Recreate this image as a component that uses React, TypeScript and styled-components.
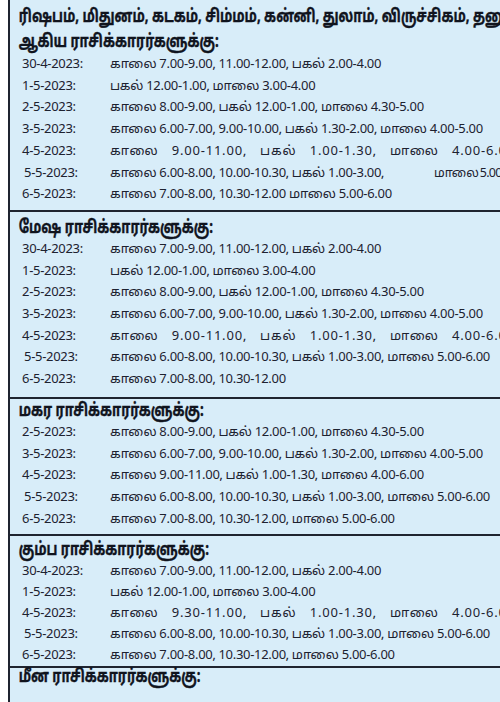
import { createGlobalStyle } from "styled-components";
import styled from "styled-components";

const GlobalStyle = createGlobalStyle`
  html, body {
    margin: 0;
    padding: 0;
    background: #ffffff;
    overflow: hidden;
  }
`;

const Page = styled.div`
  width: 500px;
  height: 702px;
  overflow: hidden;
  padding-left: 8px;
  box-sizing: border-box;
`;

const Board = styled.div`
  width: 560px;
  min-height: 702px;
  background-color: #d8edf9;
  border-left: 2px solid #1f2430;
  color: #1d2230;
  font-family: "Noto Sans Tamil", "Lohit Tamil", "Noto Sans", "DejaVu Sans", sans-serif;
`;

const Section = styled.section<{ $first?: boolean; $pt: number; $pb: number }>`
  border-top: ${(p) => (p.$first ? "none" : "2px solid #1f2430")};
  padding-top: ${(p) => p.$pt}px;
  padding-bottom: ${(p) => p.$pb}px;
`;

const Heading = styled.h2<{ $lh: number }>`
  margin: 0;
  padding-left: 12px;
  font-size: 18px;
  font-weight: 700;
  line-height: ${(p) => p.$lh}px;
  white-space: nowrap;
  color: #10141e;
  -webkit-text-stroke: 0.4px #10141e;
  transform: scaleX(0.73);
  transform-origin: left center;
`;

const Row = styled.div<{ $step: number }>`
  display: grid;
  grid-template-columns: 88px 1fr;
  padding-left: 12px;
  font-size: 13px;
  letter-spacing: -0.3px;
  line-height: ${(p) => p.$step}px;
  white-space: nowrap;
`;

const DateCell = styled.span<{ $shift?: boolean }>`
  padding-left: ${(p) => (p.$shift ? "2px" : "0")};
`;

const TimeCell = styled.span<{ $wide?: boolean }>`
  letter-spacing: ${(p) => (p.$wide ? "0.8px" : "-0.3px")};
  word-spacing: ${(p) => (p.$wide ? "9px" : "0")};
`;

const Tail = styled.span`
  margin-left: 50px;
  font-size: 12.5px;
  letter-spacing: -0.7px;
  word-spacing: -1px;
`;

type Entry = { date: string; time: string; wide?: boolean; tail?: string };
type Block = {
  title: string[];
  rows: Entry[];
  pt: number;
  pb: number;
  lh: number;
  step: number;
};

const blocks: Block[] = [
  {
    title: [
      "ரிஷபம், மிதுனம், கடகம், சிம்மம், கன்னி, துலாம், விருச்சிகம், தனுசு, மகரம், கும்பம், மீனம்",
      "ஆகிய ராசிக்காரர்களுக்கு:",
    ],
    pt: 5,
    pb: 3,
    lh: 25,
    step: 21.7,
    rows: [
      { date: "30-4-2023:", time: "காலை 7.00-9.00, 11.00-12.00, பகல் 2.00-4.00" },
      { date: "1-5-2023:", time: "பகல் 12.00-1.00, மாலை 3.00-4.00" },
      { date: "2-5-2023:", time: "காலை 8.00-9.00, பகல் 12.00-1.00, மாலை 4.30-5.00" },
      { date: "3-5-2023:", time: "காலை 6.00-7.00, 9.00-10.00, பகல் 1.30-2.00, மாலை 4.00-5.00" },
      { date: "4-5-2023:", time: "காலை 9.00-11.00, பகல் 1.00-1.30, மாலை 4.00-6.00", wide: true },
      { date: "5-5-2023:", time: "காலை 6.00-8.00, 10.00-10.30, பகல் 1.00-3.00,", tail: "மாலை 5.00-6.00" },
      { date: "6-5-2023:", time: "காலை 7.00-8.00, 10.30-12.00 மாலை 5.00-6.00" },
    ],
  },
  {
    title: ["மேஷ ராசிக்காரர்களுக்கு:"],
    pt: 6,
    pb: 5,
    lh: 22,
    step: 21.7,
    rows: [
      { date: "30-4-2023:", time: "காலை 7.00-9.00, 11.00-12.00, பகல் 2.00-4.00" },
      { date: "1-5-2023:", time: "பகல் 12.00-1.00, மாலை 3.00-4.00" },
      { date: "2-5-2023:", time: "காலை 8.00-9.00, பகல் 12.00-1.00, மாலை 4.30-5.00" },
      { date: "3-5-2023:", time: "காலை 6.00-7.00, 9.00-10.00, பகல் 1.30-2.00, மாலை 4.00-5.00" },
      { date: "4-5-2023:", time: "காலை 9.00-11.00, பகல் 1.00-1.30, மாலை 4.00-6.00", wide: true },
      { date: "5-5-2023:", time: "காலை 6.00-8.00, 10.00-10.30, பகல் 1.00-3.00, மாலை 5.00-6.00" },
      { date: "6-5-2023:", time: "காலை 7.00-8.00, 10.30-12.00" },
    ],
  },
  {
    title: ["மகர ராசிக்காரர்களுக்கு:"],
    pt: 2,
    pb: 3,
    lh: 22,
    step: 21.7,
    rows: [
      { date: "2-5-2023:", time: "காலை 8.00-9.00, பகல் 12.00-1.00, மாலை 4.30-5.00" },
      { date: "3-5-2023:", time: "காலை 6.00-7.00, 9.00-10.00, பகல் 1.30-2.00, மாலை 4.00-5.00" },
      { date: "4-5-2023:", time: "காலை 9.00-11.00, பகல் 1.00-1.30, மாலை 4.00-6.00" },
      { date: "5-5-2023:", time: "காலை 6.00-8.00, 10.00-10.30, பகல் 1.00-3.00, மாலை 5.00-6.00" },
      { date: "6-5-2023:", time: "காலை 7.00-8.00, 10.30-12.00, மாலை 5.00-6.00" },
    ],
  },
  {
    title: ["கும்ப ராசிக்காரர்களுக்கு:"],
    pt: 4,
    pb: 0,
    lh: 22,
    step: 20.8,
    rows: [
      { date: "30-4-2023:", time: "காலை 7.00-9.00, 11.00-12.00, பகல் 2.00-4.00" },
      { date: "1-5-2023:", time: "பகல் 12.00-1.00, மாலை 3.00-4.00" },
      { date: "4-5-2023:", time: "காலை 9.30-11.00, பகல் 1.00-1.30, மாலை 4.00-6.00", wide: true },
      { date: "5-5-2023:", time: "காலை 6.00-8.00, 10.00-10.30, பகல் 1.00-3.00, மாலை 5.00-6.00" },
      { date: "6-5-2023:", time: "காலை 7.00-8.00, 10.30-12.00, மாலை 5.00-6.00" },
    ],
  },
  {
    title: ["மீன ராசிக்காரர்களுக்கு:"],
    pt: 0,
    pb: 0,
    lh: 20,
    step: 21.7,
    rows: [],
  },
];

export default function App() {
  return (
    <>
      <GlobalStyle />
      <Page>
        <Board>
          {blocks.map((block, i) => (
            <Section key={i} $first={i === 0} $pt={block.pt} $pb={block.pb}>
              {block.title.map((line, j) => (
                <Heading key={j} $lh={block.lh}>
                  {line}
                </Heading>
              ))}
              {block.rows.map((row, k) => (
                <Row key={k} $step={block.step}>
                  <DateCell $shift={row.date.startsWith("5-5")}>{row.date}</DateCell>
                  <TimeCell $wide={row.wide}>
                    {row.time}
                    {row.tail && <Tail>{row.tail}</Tail>}
                  </TimeCell>
                </Row>
              ))}
            </Section>
          ))}
        </Board>
      </Page>
    </>
  );
}
